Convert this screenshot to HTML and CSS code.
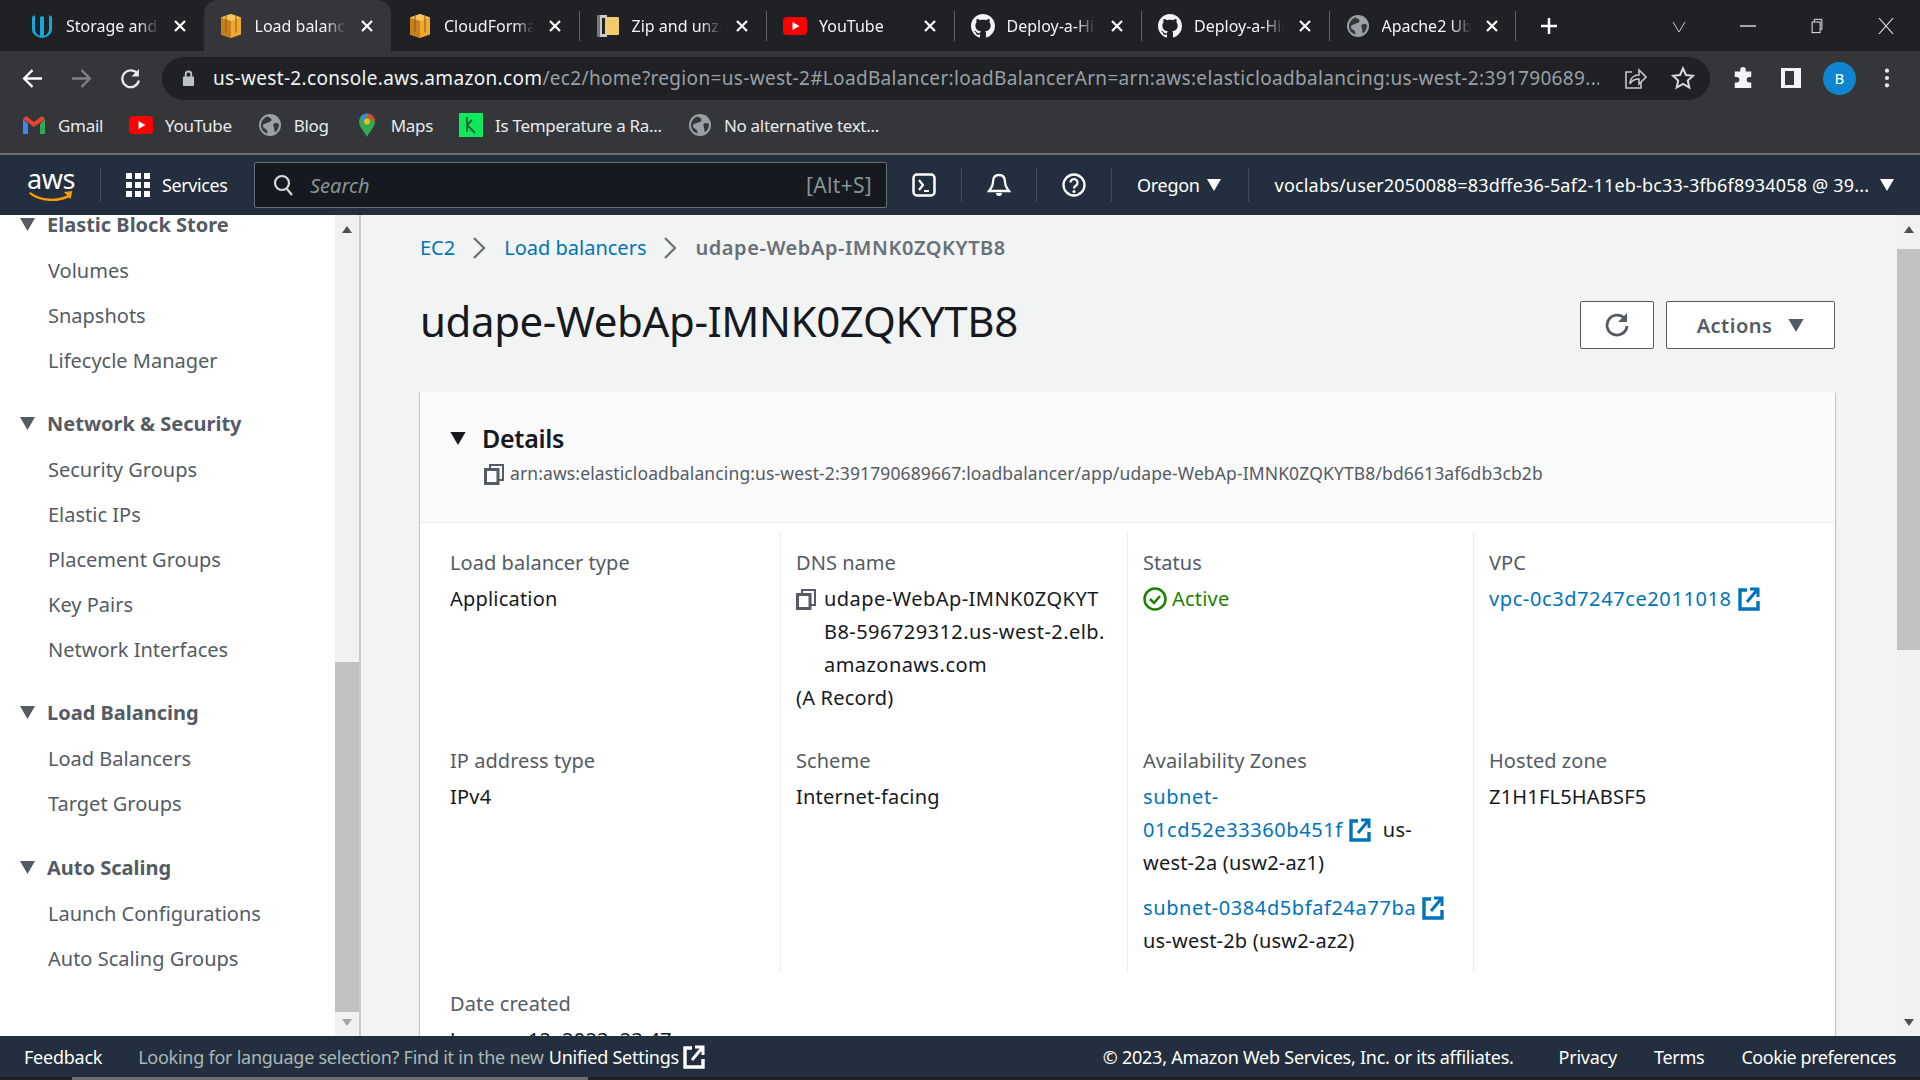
FILE: index.html
```html
<!DOCTYPE html>
<html>
<head>
    <meta charset="UTF-8">
    <title>udape-WebAp-IMNK0ZQKYTB8 | EC2 Management Console</title>
    <link rel="stylesheet" href="styles.css">
</head>
<body>
    <!-- shared icons -->
    <svg class="defs" width="0" height="0">
        <symbol id="i-cube" viewBox="0 0 24 26">
            <path d="M12 1 2 4.500v17L12 25l10-3.500v-17z" fill="#f0a92e"/>
            <path d="M2 4.500 12 8v17L2 21.500z" fill="#c9801c"/>
            <path d="M12 1 2 4.500 12 8l10-3.500z" fill="#f7c45f"/>
            <path d="M7 2.800v16.700M17 2.800v16.700" stroke="#8a5a14" stroke-width="1"/>
        </symbol>
        <symbol id="i-globe" viewBox="0 0 24 24">
            <circle cx="12" cy="12" r="11" fill="#9aa0a6"/>
            <path d="M9 3.500c2 1 4 1 4.500 3S11 9 9 10s-4 .5-4 3 3 2.500 4 4.500 0 2 .5 3C5.500 19.500 3 16 3 12c0-3.500 2.500-7 6-8.500zM16 10.500c1.500-.8 3.800-.8 5 .5 0 3.500-1.500 6.500-4 8.300-.8-1.500-.8-2.500-.8-3.800s-1.700-3.500-.2-5z" fill="#35363a"/>
        </symbol>
        <symbol id="i-github" viewBox="0 0 16 16">
            <path fill="#f1f3f4" d="M8 0C3.580 0 0 3.580 0 8c0 3.540 2.290 6.530 5.470 7.590.4.070.55-.17.55-.38 0-.19-.01-.82-.01-1.490-2.010.37-2.530-.49-2.690-.94-.09-.23-.48-.94-.82-1.130-.28-.15-.68-.52-.01-.53.63-.01 1.080.58 1.230.82.72 1.210 1.870.87 2.330.66.070-.52.28-.87.51-1.070-1.780-.2-3.640-.89-3.640-3.950 0-.87.31-1.590.82-2.150-.08-.2-.36-1.020.08-2.120 0 0 .67-.21 2.200.82.64-.18 1.320-.27 2-.27s1.360.09 2 .27c1.530-1.040 2.200-.82 2.200-.82.44 1.100.16 1.920.08 2.120.51.56.82 1.270.82 2.150 0 3.070-1.870 3.750-3.650 3.950.29.25.54.73.54 1.480 0 1.070-.01 1.930-.01 2.200 0 .21.15.46.55.38A8.010 8.010 0 0 0 16 8c0-4.420-3.580-8-8-8z"/>
        </symbol>
        <symbol id="i-close" viewBox="0 0 14 14">
            <path d="M2 2l10 10M12 2 2 12" stroke="#fff" stroke-width="2.200" fill="none"/>
        </symbol>
        <symbol id="i-external" viewBox="0 0 22 24">
            <path d="M9 3H2v19h18v-8" fill="none" stroke="currentColor" stroke-width="3.400"/>
            <path d="M9 15 19 3M12 2h8v8" fill="none" stroke="currentColor" stroke-width="3"/>
        </symbol>
        <symbol id="i-copy" viewBox="0 0 20 21">
            <path d="M6 5V1h13v15h-4" fill="none" stroke="#545b64" stroke-width="2"/>
            <rect x="1.500" y="5.500" width="12.500" height="14" fill="none" stroke="#545b64" stroke-width="3"/>
        </symbol>
        <symbol id="i-tri" viewBox="0 0 14 12">
            <path d="M0 0h14L7 12z" fill="currentColor"/>
        </symbol>
    </svg>

    <!-- ventana del navegador -->
    <div class="tabstrip">
        <div class="tab tab-first">
            <svg class="tab-icon" viewBox="0 0 24 26"><path d="M5 2 2 4v12c0 5 4 8 10 9 6-1 10-4 10-9V4l-3-2v14c0 4-3 6-5 7V4l-2-1-2 1v19c-2-1-5-3-5-7z" fill="#19a6dc"/></svg>
            <span class="tab-title">Storage and Delivery</span>
            <svg class="tab-close"><use href="#i-close"/></svg>
        </div>
        <div class="tab tab-active">
            <svg class="tab-icon"><use href="#i-cube"/></svg>
            <span class="tab-title">Load balancer details</span>
            <svg class="tab-close"><use href="#i-close"/></svg>
        </div>
        <div class="tab">
            <svg class="tab-icon"><use href="#i-cube"/></svg>
            <span class="tab-title">CloudFormation</span>
            <svg class="tab-close"><use href="#i-close"/></svg>
        </div>
        <div class="tab tab-sep">
            <svg class="tab-icon" viewBox="0 0 24 26"><rect x="9" y="4" width="14" height="18" rx="1" fill="#f2cb6c"/><path d="M3 2h8v3H6v16h5v3H3z" fill="#c9c9c9"/><path d="M1 2h3v22H1z" fill="#777"/></svg>
            <span class="tab-title">Zip and unzip files</span>
            <svg class="tab-close"><use href="#i-close"/></svg>
        </div>
        <div class="tab tab-sep">
            <svg class="tab-icon" viewBox="0 0 24 18"><rect width="24" height="18" rx="4" fill="#f00"/><path d="M9.500 5v8l7-4z" fill="#fff"/></svg>
            <span class="tab-title">YouTube</span>
            <svg class="tab-close"><use href="#i-close"/></svg>
        </div>
        <div class="tab tab-sep">
            <svg class="tab-icon"><use href="#i-github"/></svg>
            <span class="tab-title">Deploy-a-High-Availability</span>
            <svg class="tab-close"><use href="#i-close"/></svg>
        </div>
        <div class="tab tab-sep">
            <svg class="tab-icon"><use href="#i-github"/></svg>
            <span class="tab-title">Deploy-a-High-Availability</span>
            <svg class="tab-close"><use href="#i-close"/></svg>
        </div>
        <div class="tab tab-sep tab-last">
            <svg class="tab-icon"><use href="#i-globe"/></svg>
            <span class="tab-title">Apache2 Ubuntu Default</span>
            <svg class="tab-close"><use href="#i-close"/></svg>
        </div>
        <svg class="tab-new" viewBox="0 0 18 18"><path d="M9 1v16M1 9h16" stroke="#fff" stroke-width="2.500"/></svg>
        <div class="win-controls">
            <svg class="win-btn" viewBox="0 0 16 16"><path d="M2 4l6 10 6-10" fill="none" stroke="#c8cacc" stroke-width="1"/></svg>
            <svg class="win-btn" viewBox="0 0 16 16"><path d="M0 8h16" stroke="#fff" stroke-width="1.200"/></svg>
            <svg class="win-btn" viewBox="0 0 16 18"><rect x="2.500" y="4.500" width="9" height="12" fill="none" stroke="#fff"/><path d="M5 4V1.500h8.500V13H12" fill="none" stroke="#fff"/></svg>
            <svg class="win-btn" viewBox="0 0 18 18"><path d="M1 0l16 18M17 0 1 18" stroke="#e8eaed" stroke-width="1.200"/></svg>
        </div>
    </div>

    <div class="toolbar">
        <svg class="tool-btn" viewBox="0 0 20 20"><path d="M19 10H3M10 2l-8 8 8 8" fill="none" stroke="#fff" stroke-width="2.200"/></svg>
        <svg class="tool-btn" viewBox="0 0 20 20"><path d="M1 10h16M10 2l8 8-8 8" fill="none" stroke="#7f8184" stroke-width="2.200"/></svg>
        <svg class="tool-btn" viewBox="0 0 20 20"><path d="M17 6a8 8 0 1 0 1 6" fill="none" stroke="#e8eaed" stroke-width="2.200"/><path d="M18 1v7h-7z" fill="#e8eaed"/></svg>
        <div class="omnibox">
            <svg class="lock" viewBox="0 0 14 18"><path d="M4 8V5a3 3 0 0 1 6 0v3" fill="none" stroke="#bdc1c6" stroke-width="2"/><rect x="1" y="7.500" width="12" height="10" rx="1" fill="#bdc1c6"/></svg>
            <span class="url"><span class="url-host">us-west-2.console.aws.amazon.com</span>/ec2/home?region=us-west-2#LoadBalancer:loadBalancerArn=arn:aws:elasticloadbalancing:us-west-2:391790689...</span>
            <svg class="omni-icon" viewBox="0 0 22 24"><path d="M8 6H2v16h15v-6" fill="none" stroke="#c4c7c9" stroke-width="1.600"/><path d="M6 18c0-6 4-9 9-9V4l7 7-7 7v-5c-4 0-7 1-9 5z" fill="none" stroke="#c4c7c9" stroke-width="1.600"/></svg>
            <svg class="omni-icon" viewBox="0 0 24 24"><path d="M12 2.500l3 6.500 7 .8-5.200 4.700 1.500 7L12 17.900l-6.300 3.600 1.500-7L2 9.800 9 9z" fill="none" stroke="#d7d9db" stroke-width="2"/></svg>
        </div>
        <svg class="ext-icon ext-puzzle" viewBox="0 0 24 24"><path d="M9 3a3 3 0 0 1 6 0v2h6v6h-2a3 3 0 0 0 0 6h2v6H3v-6h2a3 3 0 0 0 0-6H3V5h6z" fill="#f1f3f4"/></svg>
        <svg class="ext-icon" viewBox="0 0 22 22"><path d="M1 1h20v20H1z" fill="#f1f3f4"/><rect x="5" y="4" width="9" height="14" fill="#35363a"/></svg>
        <span class="avatar">B</span>
        <svg class="menu-dots" viewBox="0 0 6 24"><circle cx="3" cy="4" r="2.300" fill="#e8eaed"/><circle cx="3" cy="12" r="2.300" fill="#e8eaed"/><circle cx="3" cy="20" r="2.300" fill="#e8eaed"/></svg>
    </div>

    <div class="bookmarks">
        <span class="bm">
            <svg class="bm-icon" viewBox="0 0 24 18"><path d="M1 3v15h5V8z" fill="#4285f4"/><path d="M18 8v10h5V3z" fill="#34a853"/><path d="M1 3l11 8 11-8-3-3-8 6-8-6z" fill="#ea4335"/></svg>
            Gmail
        </span>
        <span class="bm">
            <svg class="bm-icon" viewBox="0 0 24 18"><rect width="24" height="18" rx="4" fill="#f00"/><path d="M9.500 5v8l7-4z" fill="#fff"/></svg>
            YouTube
        </span>
        <span class="bm"><svg class="bm-icon"><use href="#i-globe"/></svg>Blog</span>
        <span class="bm">
            <svg class="bm-icon" viewBox="0 0 18 24"><path d="M9 24C6 18 1 14 1 8.500A8 8 0 0 1 9 .5c4 0 8 3.500 8 8C17 14 12 18 9 24z" fill="#34a853"/><path d="M3 3A8 8 0 0 1 9 .5L5 10z" fill="#4285f4"/><path d="M9 .5c4 0 8 3.500 8 8l-6-3z" fill="#ea4335"/><circle cx="9" cy="8.500" r="3" fill="#fbbc04"/></svg>
            Maps
        </span>
        <span class="bm">
            <svg class="bm-icon" viewBox="0 0 24 24"><rect width="24" height="24" fill="#0fe85a"/><path d="M8 4v15M8 12l5-5M8 12l8 8" fill="none" stroke="#063" stroke-width="1.800"/></svg>
            Is Temperature a Ra...
        </span>
        <span class="bm"><svg class="bm-icon"><use href="#i-globe"/></svg>No alternative text...</span>
    </div>

    <!-- barra de la consola -->
    <header class="aws-nav">
        <div class="aws-logo">
            <span class="aws-word">aws</span>
            <svg class="aws-smile" viewBox="0 0 48 14"><path d="M1 2c12 9 30 10 43 3" fill="none" stroke="#f90" stroke-width="2.600"/><path d="M38 1l9-1-2 9z" fill="#f90"/></svg>
        </div>
        <span class="nav-div"></span>
        <svg class="nav-grid" viewBox="0 0 24 24"><path fill="#fff" d="M0 0h6v6H0zM9 0h6v6H9zM18 0h6v6h-6zM0 9h6v6H0zM9 9h6v6H9zM18 9h6v6h-6zM0 18h6v6H0zM9 18h6v6H9zM18 18h6v6h-6z"/></svg>
        <span class="nav-services">Services</span>
        <div class="nav-search">
            <svg class="search-icon" viewBox="0 0 20 22"><circle cx="9" cy="9" r="7" fill="none" stroke="#d5dbdb" stroke-width="2.200"/><path d="M14 15l5 6" stroke="#d5dbdb" stroke-width="2.200"/></svg>
            <span class="search-text">Search</span>
            <span class="search-key">[Alt+S]</span>
        </div>
        <svg class="nav-icon nav-shell" viewBox="0 0 24 24"><rect x="1.500" y="1.500" width="21" height="21" rx="3.500" fill="none" stroke="#fff" stroke-width="2.500"/><path d="M7 7l4 5-4 5M12 18h5" fill="none" stroke="#fff" stroke-width="2.200"/></svg>
        <span class="nav-div nav-div-b"></span>
        <svg class="nav-icon" viewBox="0 0 24 24"><path d="M12 2c4 0 6 3 6 7 0 5 2 6 4 9H2c2-3 4-4 4-9 0-4 2-7 6-7z" fill="none" stroke="#fff" stroke-width="2.300"/><path d="M9 20a3 3 0 0 0 6 0z" fill="#fff"/></svg>
        <span class="nav-div nav-div-b"></span>
        <svg class="nav-icon" viewBox="0 0 24 24"><circle cx="12" cy="12" r="10.500" fill="none" stroke="#fff" stroke-width="2.300"/><path d="M8.500 9.500a3.500 3.500 0 1 1 5.500 3c-1.500 1-2 1.500-2 3" fill="none" stroke="#fff" stroke-width="2.300"/><circle cx="12" cy="18.500" r="1.500" fill="#fff"/></svg>
        <span class="nav-div nav-div-b"></span>
        <span class="nav-region">Oregon</span>
        <svg class="nav-caret"><use href="#i-tri"/></svg>
        <span class="nav-div nav-div-c"></span>
        <span class="nav-account">voclabs/user2050088=83dffe36-5af2-11eb-bc33-3fb6f8934058 @ 39...</span>
        <svg class="nav-caret"><use href="#i-tri"/></svg>
    </header>

    <div class="console">
        <aside class="sidebar">
            <nav class="side-list">
                <section class="side-group">
                    <h3 class="side-head"><svg class="side-tri"><use href="#i-tri"/></svg>Elastic Block Store</h3>
                    <a class="side-item">Volumes</a>
                    <a class="side-item">Snapshots</a>
                    <a class="side-item">Lifecycle Manager</a>
                </section>
                <section class="side-group">
                    <h3 class="side-head"><svg class="side-tri"><use href="#i-tri"/></svg>Network &amp; Security</h3>
                    <a class="side-item">Security Groups</a>
                    <a class="side-item">Elastic IPs</a>
                    <a class="side-item">Placement Groups</a>
                    <a class="side-item">Key Pairs</a>
                    <a class="side-item">Network Interfaces</a>
                </section>
                <section class="side-group side-group-lb">
                    <h3 class="side-head"><svg class="side-tri"><use href="#i-tri"/></svg>Load Balancing</h3>
                    <a class="side-item">Load Balancers</a>
                    <a class="side-item">Target Groups</a>
                </section>
                <section class="side-group">
                    <h3 class="side-head"><svg class="side-tri"><use href="#i-tri"/></svg>Auto Scaling</h3>
                    <a class="side-item">Launch Configurations</a>
                    <a class="side-item">Auto Scaling Groups</a>
                </section>
            </nav>
            <div class="scrollbar scrollbar-side">
                <span class="sb-arrow sb-up"></span>
                <span class="sb-thumb"></span>
                <span class="sb-arrow sb-down"></span>
            </div>
        </aside>

        <main class="content">
            <div class="breadcrumb">
                <a class="link">EC2</a>
                <svg class="crumb-sep" viewBox="0 0 14 22"><path d="M2 1l10 10L2 21" fill="none" stroke="#687078" stroke-width="2.200"/></svg>
                <a class="link">Load balancers</a>
                <svg class="crumb-sep" viewBox="0 0 14 22"><path d="M2 1l10 10L2 21" fill="none" stroke="#687078" stroke-width="2.200"/></svg>
                <span class="crumb-now">udape-WebAp-IMNK0ZQKYTB8</span>
            </div>

            <div class="page-head">
                <h1 class="page-title">udape-WebAp-IMNK0ZQKYTB8</h1>
                <button class="btn btn-icon">
                    <svg class="refresh" viewBox="0 0 24 26"><path d="M20 7a10 10 0 1 0 2 7" fill="none" stroke="#545b64" stroke-width="2.800"/><path d="M22 1v9h-9z" fill="#545b64"/></svg>
                </button>
                <button class="btn">Actions<svg class="btn-caret"><use href="#i-tri"/></svg></button>
            </div>

            <section class="card">
                <div class="card-head">
                    <h2 class="card-title"><svg class="card-tri"><use href="#i-tri"/></svg>Details</h2>
                    <p class="card-arn"><svg class="copy copy-arn"><use href="#i-copy"/></svg><span class="arn-text">arn:aws:elasticloadbalancing:us-west-2:391790689667:loadbalancer/app/udape-WebAp-IMNK0ZQKYTB8/bd6613af6db3cb2b</span></p>
                </div>
                <div class="detail-grid">
                    <div class="cell">
                        <div class="label">Load balancer type</div>
                        <div class="value">Application</div>
                    </div>
                    <div class="cell">
                        <div class="label">DNS name</div>
                        <div class="value dns"><svg class="copy copy-dns"><use href="#i-copy"/></svg>udape-WebAp-IMNK0ZQKYT<br>B8-596729312.us-west-2.elb.<br>amazonaws.com</div>
                        <div class="value">(A Record)</div>
                    </div>
                    <div class="cell">
                        <div class="label">Status</div>
                        <div class="value status">
                            <svg class="status-icon" viewBox="0 0 24 24"><circle cx="12" cy="12" r="10.500" fill="none" stroke="#1d8102" stroke-width="2.500"/><path d="M7 12l4 4 6-7" fill="none" stroke="#1d8102" stroke-width="2.500"/></svg>Active
                        </div>
                    </div>
                    <div class="cell">
                        <div class="label">VPC</div>
                        <div class="value"><a class="link">vpc-0c3d7247ce2011018<svg class="ext"><use href="#i-external"/></svg></a></div>
                    </div>
                    <div class="cell cell-b">
                        <div class="label">IP address type</div>
                        <div class="value">IPv4</div>
                    </div>
                    <div class="cell cell-b">
                        <div class="label">Scheme</div>
                        <div class="value">Internet-facing</div>
                    </div>
                    <div class="cell cell-b">
                        <div class="label">Availability Zones</div>
                        <div class="value"><a class="link">subnet-<br>01cd52e33360b451f<svg class="ext"><use href="#i-external"/></svg></a><span class="az">us-</span><br>west-2a (usw2-az1)</div>
                        <div class="value value-gap"><a class="link">subnet-0384d5bfaf24a77ba<svg class="ext"><use href="#i-external"/></svg></a><br>us-west-2b (usw2-az2)</div>
                    </div>
                    <div class="cell cell-b">
                        <div class="label">Hosted zone</div>
                        <div class="value">Z1H1FL5HABSF5</div>
                    </div>
                    <div class="cell cell-c">
                        <div class="label">Date created</div>
                        <div class="value">January 12, 2023, 23:47</div>
                    </div>
                </div>
            </section>
        </main>

        <div class="scrollbar scrollbar-page">
            <span class="sb-arrow sb-up"></span>
            <span class="sb-thumb"></span>
            <span class="sb-arrow sb-down"></span>
        </div>
    </div>

    <footer class="aws-foot">
        <span class="foot-feedback">Feedback</span>
        <span class="foot-note">Looking for language selection? Find it in the new</span>
        <span class="foot-unified">Unified Settings<svg class="foot-ext"><use href="#i-external"/></svg></span>
        <span class="foot-copy">© 2023, Amazon Web Services, Inc. or its affiliates.</span>
        <span class="foot-link">Privacy</span>
        <span class="foot-link">Terms</span>
        <span class="foot-link foot-cookie">Cookie preferences</span>
    </footer>
    <div class="hscroll"><span class="hscroll-thumb"></span></div>
</body>
</html>
```

FILE: styles.css
```css
* {
    box-sizing: border-box;
}

html, body {
    margin: 0;
    height: 100%;
}

body {
    width: 1920px;
    height: 1080px;
    overflow: hidden;
    display: flex;
    flex-direction: column;
    font-family: "Noto Sans", sans-serif;
    color: #16191f;
    background-color: #f2f3f3;
}

.defs {
    position: absolute;
}

/* pestañas */
.tabstrip {
    height: 51px;
    flex: none;
    display: flex;
    align-items: center;
    padding-left: 16px;
    background-color: #202124;
}

.tab {
    position: relative;
    width: 187.5px;
    height: 51px;
    display: flex;
    align-items: center;
    padding: 0 17px 0 17px;
    color: #f1f3f4;
    font-size: 16px;
}

.tab-first {
    padding-left: 14px;
}

.tab-active {
    padding-left: 15px;
    background-color: #35363a;
    border-radius: 14px 14px 0 0;
}

.tab-sep::before, .tab-last::after {
    content: "";
    position: absolute;
    left: 0;
    top: 11px;
    height: 30px;
    width: 1px;
    background-color: #5f6368;
}

.tab-last::after {
    left: auto;
    right: 0;
}

.tab-icon {
    width: 24px;
    height: 26px;
    flex: none;
    margin-right: 12px;
}

.tab-title {
    flex: 1;
    min-width: 0;
    white-space: nowrap;
    overflow: hidden;
    -webkit-mask-image: linear-gradient(to right, #000 78%, transparent 100%);
    mask-image: linear-gradient(to right, #000 78%, transparent 100%);
}

.tab-close {
    width: 14px;
    height: 14px;
    flex: none;
    margin-left: 14px;
}

.tab-new {
    width: 18px;
    height: 18px;
    margin-left: 24px;
}

.win-controls {
    margin-left: auto;
    display: flex;
    align-items: center;
    gap: 53px;
    padding-right: 26px;
}

.win-btn {
    width: 16px;
    height: 16px;
}

/* barra de direcciones */
.toolbar {
    height: 51px;
    flex: none;
    display: flex;
    align-items: center;
    padding: 3px 0 0 22px;
    background-color: #35363a;
}

.tool-btn {
    width: 21px;
    height: 21px;
    margin-right: 28px;
}

.omnibox {
    width: 1548px;
    height: 43px;
    margin-left: -7px;
    display: flex;
    align-items: center;
    padding: 0 15px 0 20px;
    border-radius: 22px;
    background-color: #202124;
}

.lock {
    width: 13px;
    height: 18px;
    margin-right: 18px;
    flex: none;
}

.url {
    flex: 1;
    white-space: nowrap;
    overflow: hidden;
    font-size: 19px;
    letter-spacing: 0.33px;
    color: #9aa0a6;
}

.url-host {
    color: #f1f3f4;
}

.omni-icon {
    width: 24px;
    height: 24px;
    margin-left: 24px;
    flex: none;
}

.ext-icon {
    width: 22px;
    height: 22px;
    margin-left: 26px;
    flex: none;
}

.ext-puzzle {
    margin-left: 22px;
}

.avatar {
    width: 33px;
    height: 33px;
    margin-left: 21px;
    display: flex;
    align-items: center;
    justify-content: center;
    border-radius: 50%;
    font-size: 15px;
    color: #fff;
    background-color: #0f85d0;
}

.menu-dots {
    width: 6px;
    height: 22px;
    margin-left: 28px;
}

/* marcadores */
.bookmarks {
    height: 51px;
    flex: none;
    display: flex;
    align-items: center;
    gap: 26px;
    padding: 0 0 5px 22px;
    font-size: 17px;
    letter-spacing: -0.3px;
    color: #e8eaed;
    background-color: #35363a;
}

.bm {
    display: flex;
    align-items: center;
    gap: 12px;
    white-space: nowrap;
}

.bm-icon {
    width: 24px;
    height: 24px;
}

/* consola */
.aws-nav {
    height: 62px;
    flex: none;
    display: flex;
    align-items: center;
    padding-left: 27px;
    border-top: 2px solid #6b6d70;
    color: #fff;
    font-size: 18px;
    background-color: #232f3e;
}

.aws-logo {
    width: 48px;
    display: flex;
    flex-direction: column;
    align-items: center;
}

.aws-word {
    font-size: 27px;
    line-height: 24px;
    letter-spacing: -0.5px;
}

.aws-smile {
    width: 48px;
    height: 13px;
}

.nav-div {
    width: 1px;
    height: 34px;
    margin: 0 25px;
    background-color: #414d5c;
}

.nav-grid {
    width: 24px;
    height: 24px;
    flex: none;
}

.nav-services {
    width: 104px;
    padding-left: 12px;
    letter-spacing: -0.4px;
}

.nav-search {
    width: 633px;
    height: 46px;
    display: flex;
    align-items: center;
    padding: 0 14px 0 18px;
    border: 1px solid #687078;
    border-radius: 2px;
    background-color: #16191f;
}

.search-icon {
    width: 20px;
    height: 22px;
    flex: none;
}

.search-text {
    margin-left: 17px;
    font-size: 20px;
    font-style: italic;
    color: #879596;
    flex: 1;
}

.search-key {
    font-size: 21px;
    letter-spacing: 0.3px;
    color: #879596;
}

.nav-icon {
    width: 24px;
    height: 24px;
    flex: none;
}

.nav-shell {
    margin-left: 25px;
}

.nav-div-b {
    margin: 0 25px;
}

.nav-region {
    letter-spacing: -0.3px;
}

.nav-caret {
    width: 14px;
    height: 12px;
    margin-left: 7px;
    flex: none;
}

.nav-div-c {
    margin: 0 26px 0 27px;
}

.nav-account {
    width: 598px;
    white-space: nowrap;
    letter-spacing: 0.18px;
}

.console {
    flex: 1;
    min-height: 0;
    display: flex;
}

/* navegación lateral */
.sidebar {
    width: 361px;
    flex: none;
    display: flex;
    overflow: hidden;
    border-right: 2px solid #c8cbcc;
    background-color: #fff;
}

.side-list {
    width: 335px;
    flex: none;
    margin-top: -14px;
    font-size: 20px;
    color: #545b64;
}

.side-group {
    margin-bottom: 17px;
}

.side-group-lb {
    margin-bottom: 18px;
}

.side-head {
    height: 47px;
    margin: 0;
    display: flex;
    align-items: center;
    font-size: 20px;
    font-weight: 700;
    color: #545b64;
}

.side-tri {
    width: 15px;
    height: 13px;
    margin: 0 12px 0 20px;
    flex: none;
}

.side-item {
    display: flex;
    align-items: center;
    height: 45px;
    padding-left: 48px;
}

/* barras de desplazamiento */
.scrollbar {
    display: flex;
    flex-direction: column;
    align-items: center;
    background-color: #f1f1f1;
}

.scrollbar-side {
    width: 24px;
}

.scrollbar-page {
    width: 23px;
    flex: none;
}

.sb-arrow {
    flex: none;
    width: 0;
    height: 0;
    border-left: 5px solid transparent;
    border-right: 5px solid transparent;
}

.sb-up {
    margin-top: 11px;
    border-bottom: 7px solid #505050;
}

.sb-down {
    margin-bottom: 10px;
    border-top: 7px solid #a3a3a3;
}

.sb-thumb {
    width: 100%;
    background-color: #c1c1c1;
}

.scrollbar-side .sb-thumb {
    height: 350px;
    margin-top: 429px;
    margin-bottom: auto;
}

.scrollbar-page .sb-thumb {
    height: 401px;
    margin-top: 16px;
    margin-bottom: auto;
}

.scrollbar-page .sb-down {
    border-top-color: #505050;
}

/* contenido */
.content {
    flex: 1;
    min-width: 0;
    overflow: hidden;
    padding: 16px 62px 0 59px;
    background-color: #f2f3f3;
}

.link {
    color: #0073bb;
}

.breadcrumb {
    height: 33px;
    display: flex;
    align-items: center;
    font-size: 20px;
}

.crumb-sep {
    width: 14px;
    height: 22px;
    margin: 0 18px 0 17px;
}

.crumb-now {
    font-weight: 600;
    color: #687078;
    letter-spacing: 0.55px;
}

.page-head {
    height: 48px;
    margin-top: 37px;
    display: flex;
    align-items: center;
    gap: 12px;
}

.page-title {
    flex: 1;
    margin: 0 0 10px;
    font-size: 42px;
    font-weight: 400;
    letter-spacing: -0.4px;
}

.btn {
    height: 48px;
    width: 169px;
    display: flex;
    align-items: center;
    justify-content: center;
    padding: 0;
    border: 1px solid #545b64;
    border-radius: 2px;
    font-family: inherit;
    font-size: 20px;
    font-weight: 600;
    letter-spacing: 0.5px;
    color: #545b64;
    background-color: #fff;
}

.btn-icon {
    width: 74px;
}

.refresh {
    width: 24px;
    height: 26px;
}

.btn-caret {
    width: 16px;
    height: 13px;
    margin-left: 16px;
}

.card {
    margin-top: 43px;
    background-color: #fff;
    box-shadow: 0 1px 1px 0 rgba(0, 28, 36, 0.3), 1px 1px 1px 0 rgba(0, 28, 36, 0.15), -1px 1px 1px 0 rgba(0, 28, 36, 0.15);
}

.card-head {
    height: 131px;
    padding: 28px 30px 0;
    border-bottom: 1px solid #eaeded;
    background-color: #fafafa;
}

.card-title {
    margin: 0;
    display: flex;
    align-items: center;
    font-size: 25px;
    font-weight: 600;
    line-height: 36px;
    letter-spacing: -0.3px;
}

.card-tri {
    width: 16px;
    height: 13px;
    margin-right: 16px;
    flex: none;
}

.card-arn {
    margin: 0;
    padding-left: 34px;
    display: flex;
    align-items: flex-start;
    font-size: 17.5px;
    line-height: 28px;
    letter-spacing: 0.12px;
    color: #545b64;
}

.arn-text {
    margin-top: 3px;
}

.copy {
    flex: none;
    width: 20px;
    height: 21px;
}

.copy-arn {
    margin: 8px 6px 0 0;
}

.copy-dns {
    position: absolute;
    left: -28px;
    top: 7px;
}

.detail-grid {
    display: grid;
    grid-template-columns: 360px 347px 346px 1fr;
    padding-top: 9px;
}

.cell {
    height: 197px;
    padding: 14px 14px 0 15px;
    border-left: 1px solid #eaeded;
}

.cell:first-child, .cell-b:nth-child(5) {
    padding-left: 30px;
    border-left: none;
}

.cell-b {
    height: 243px;
    padding-top: 15px;
}

.cell-c {
    height: 80px;
    padding: 15px 0 0 30px;
    border-left: none;
    white-space: nowrap;
}

.label {
    font-size: 20px;
    line-height: 33px;
    letter-spacing: 0.05px;
    color: #545b64;
}

.value {
    position: relative;
    margin-top: 3px;
    font-size: 20px;
    line-height: 33px;
    letter-spacing: 0.2px;
}

.value + .value {
    margin-top: 0;
}

.value-gap + .value, .value + .value-gap {
    margin-top: 12px;
}

.value .link {
    letter-spacing: 0.6px;
}

.dns {
    margin-left: 28px;
    white-space: nowrap;
    letter-spacing: 0.45px;
}

.status {
    display: flex;
    align-items: center;
    color: #1d8102;
}

.status-icon {
    width: 24px;
    height: 24px;
    margin-right: 5px;
    flex: none;
}

.ext {
    width: 22px;
    height: 24px;
    margin-left: 6px;
    vertical-align: -5px;
}

.az {
    margin-left: 12px;
}

/* pie */
.aws-foot {
    height: 41px;
    flex: none;
    display: flex;
    align-items: center;
    padding: 0 24px;
    font-size: 18px;
    letter-spacing: -0.25px;
    color: #fff;
    background-color: #232f3e;
}

.foot-feedback {
    margin-right: 36px;
}

.foot-note {
    color: #aab7b8;
    margin-right: 5px;
}

.foot-unified {
    display: flex;
    align-items: center;
}

.foot-ext {
    width: 22px;
    height: 24px;
    margin-left: 4px;
}

.foot-copy {
    margin-left: auto;
    margin-right: 45px;
}

.foot-link {
    margin-right: 37px;
}

.foot-cookie {
    margin-right: 0;
    letter-spacing: -0.45px;
}

.hscroll {
    height: 3px;
    flex: none;
    padding-left: 72px;
    background-color: #1e1e1e;
}

.hscroll-thumb {
    display: block;
    width: 516px;
    height: 3px;
    background-color: #6b6b6b;
}
```
